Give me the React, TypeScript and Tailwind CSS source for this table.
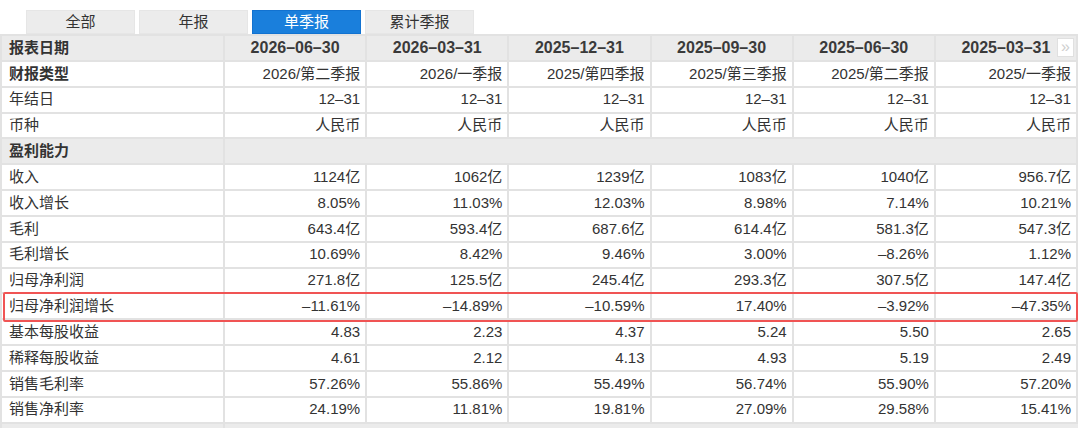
const font = { fontFamily: '"Liberation Sans", "Noto Sans CJK SC", sans-serif' };

type Row = { label: string; values: string[]; kind?: 'head' | 'bold' | 'section' };

const rows: Row[] = [
  { label: '报表日期', kind: 'head', values: ['2026–06–30', '2026–03–31', '2025–12–31', '2025–09–30', '2025–06–30', '2025–03–31'] },
  { label: '财报类型', kind: 'bold', values: ['2026/第二季报', '2026/一季报', '2025/第四季报', '2025/第三季报', '2025/第二季报', '2025/一季报'] },
  { label: '年结日', values: ['12–31', '12–31', '12–31', '12–31', '12–31', '12–31'] },
  { label: '币种', values: ['人民币', '人民币', '人民币', '人民币', '人民币', '人民币'] },
  { label: '盈利能力', kind: 'section', values: [] },
  { label: '收入', values: ['1124亿', '1062亿', '1239亿', '1083亿', '1040亿', '956.7亿'] },
  { label: '收入增长', values: ['8.05%', '11.03%', '12.03%', '8.98%', '7.14%', '10.21%'] },
  { label: '毛利', values: ['643.4亿', '593.4亿', '687.6亿', '614.4亿', '581.3亿', '547.3亿'] },
  { label: '毛利增长', values: ['10.69%', '8.42%', '9.46%', '3.00%', '–8.26%', '1.12%'] },
  { label: '归母净利润', values: ['271.8亿', '125.5亿', '245.4亿', '293.3亿', '307.5亿', '147.4亿'] },
  { label: '归母净利润增长', values: ['–11.61%', '–14.89%', '–10.59%', '17.40%', '–3.92%', '–47.35%'] },
  { label: '基本每股收益', values: ['4.83', '2.23', '4.37', '5.24', '5.50', '2.65'] },
  { label: '稀释每股收益', values: ['4.61', '2.12', '4.13', '4.93', '5.19', '2.49'] },
  { label: '销售毛利率', values: ['57.26%', '55.86%', '55.49%', '56.74%', '55.90%', '57.20%'] },
  { label: '销售净利率', values: ['24.19%', '11.81%', '19.81%', '27.09%', '29.58%', '15.41%'] },
];

const tabs = ['全部', '年报', '单季报', '累计季报'];

export default function App() {
  return (
    <div className="h-[428px] w-[1080px] overflow-hidden bg-white text-[15px] text-[#333]" style={font}>
      <div className="flex h-[34px] items-end gap-[4px] pl-[26px]">
        {tabs.map((t, i) => (
          <div
            key={t}
            className={
              i === 2
                ? 'flex h-[24px] w-[109px] items-center justify-center border border-[#1272d0] bg-[#1a7fdc] text-white'
                : 'flex h-[24px] w-[109px] items-center justify-center border border-[#e6e6e6] bg-[#ececec] text-[#333]'
            }
          >
            {t}
          </div>
        ))}
      </div>
      <div className="relative w-[1078px] border-t-2 border-l-2 border-[#e2e2e2]">
        {rows.map((r) => {
          const gray = r.kind === 'head' || r.kind === 'section';
          const bold = r.kind !== undefined;
          return (
            <div
              key={r.label}
              className={`grid h-[25.85px] grid-cols-[223px_repeat(6,1fr)] border-b-2 border-[#e2e2e2] ${gray ? 'bg-[#ebebeb]' : 'bg-white'}`}
            >
              <div className={`flex items-center border-r-2 border-[#e2e2e2] pl-[7px] ${bold ? 'font-bold' : ''}`}>{r.label}</div>
              {r.kind === 'section' ? (
                <div className="col-span-6 border-r-2 border-[#e2e2e2]" />
              ) : r.kind === 'head' ? (
                r.values.map((v, i) => (
                  <div
                    key={i}
                    className="relative flex items-center justify-center border-r-2 border-[#e2e2e2] text-[16px] font-bold text-[#3a3a3a]"
                  >
                    {v}
                    {i === 5 && (
                      <span className="absolute right-[2px] top-[2px] flex h-[19px] w-[17px] items-center justify-center border border-[#e0e0e0] bg-white pb-[2px] text-[16px] font-normal leading-none text-[#cfcfcf]">
                        »
                      </span>
                    )}
                  </div>
                ))
              ) : (
                r.values.map((v, i) => (
                  <div key={i} className="flex items-center justify-end border-r-2 border-[#e2e2e2] pr-[5px]">
                    {v}
                  </div>
                ))
              )}
            </div>
          );
        })}
        <div className="grid h-[10px] grid-cols-[223px_repeat(6,1fr)] bg-[#ebebeb]">
          <div className="border-r-2 border-[#e2e2e2]" />
          <div className="col-span-6" />
        </div>
        <div className="pointer-events-none absolute left-[1px] top-[256px] h-[30px] w-[1075px] rounded-[2px] border-2 border-[#f05454]" />
      </div>
    </div>
  );
}
